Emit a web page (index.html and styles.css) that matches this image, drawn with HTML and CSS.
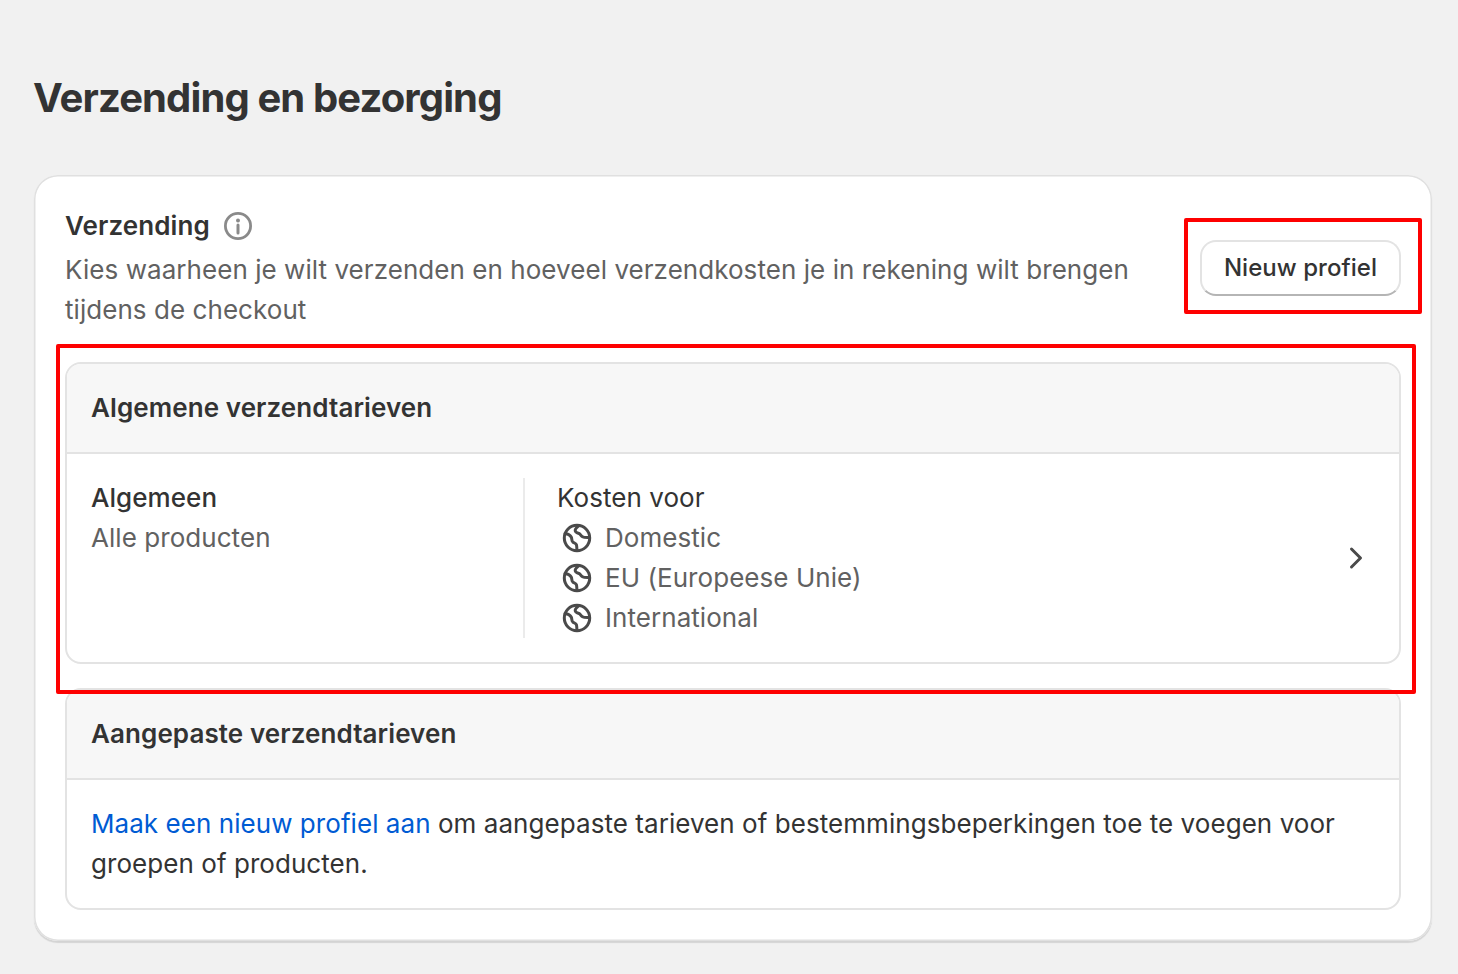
FILE: index.html
```html
<!DOCTYPE html>
<html lang="nl">
<head>
<meta charset="utf-8">
<title>Verzending en bezorging</title>
<link rel="stylesheet" href="styles.css">
</head>
<body>
<main class="page">
  <h1 class="page-title">Verzending en bezorging</h1>
  <section class="card">
    <header class="card-head">
      <div class="card-intro">
        <div class="card-title-row">
          <h2 class="card-title">Verzending</h2>
          <svg class="info-icon" viewBox="0 0 28 28" fill="none"><circle cx="14" cy="14" r="12.6" stroke="#8a8a8a" stroke-width="2.8"/><circle cx="14" cy="8.4" r="2" fill="#8a8a8a"/><path d="M14 13v8" stroke="#8a8a8a" stroke-width="3" stroke-linecap="round"/></svg>
        </div>
        <p class="muted">Kies waarheen je wilt verzenden en hoeveel verzendkosten je in rekening wilt brengen tijdens de checkout</p>
      </div>
      <button class="button">Nieuw profiel</button>
    </header>

    <div class="panel panel-general">
      <h3 class="panel-head">Algemene verzendtarieven</h3>
      <div class="profile-row">
        <div class="profile-name">
          <div class="strong">Algemeen</div>
          <div class="muted">Alle producten</div>
        </div>
        <div class="profile-zones">
          <div class="zones-title">Kosten voor</div>
          <div class="zone"><svg class="globe" viewBox="0 0 30 30" fill="none"><use href="#globe"/></svg><span class="muted">Domestic</span></div>
          <div class="zone"><svg class="globe" viewBox="0 0 30 30" fill="none"><use href="#globe"/></svg><span class="muted">EU (Europeese Unie)</span></div>
          <div class="zone"><svg class="globe" viewBox="0 0 30 30" fill="none"><use href="#globe"/></svg><span class="muted">International</span></div>
        </div>
        <svg class="chevron" viewBox="0 0 14 24" fill="none"><path d="M2.500 3l9 9-9 9" stroke="#4a4a4a" stroke-width="3" stroke-linecap="round" stroke-linejoin="round"/></svg>
      </div>
    </div>

    <div class="panel panel-custom">
      <h3 class="panel-head">Aangepaste verzendtarieven</h3>
      <p class="panel-body"><a class="link" href="#">Maak een nieuw profiel aan</a> om aangepaste tarieven of bestemmingsbeperkingen toe te voegen voor groepen of producten.</p>
    </div>
  </section>
</main>
<div class="highlight highlight-button"></div>
<div class="highlight highlight-panel"></div>
<svg class="sprite" aria-hidden="true"><defs><g id="globe" stroke="#4a4a4a" stroke-width="3" stroke-linejoin="round" stroke-linecap="round"><circle cx="15" cy="15" r="12.7"/><path d="M17 2.500c-2 1.500-4 3-3.800 5.200.2 2 2.300 2.300 3.800 2.800 1.500.5 1.800 2.300 3.500 3.300 1.600.9 4 .8 6.700.7"/><path d="M3.200 10.500c2.500.3 5 1.500 6 3.500s.2 3.500 1.500 4.800c1.500 1.400 3.300 1.400 3.800 3.200.4 1.600.2 3.200.5 5.200"/></g></defs></svg>
</body>
</html>
```

FILE: styles.css
```css
* { box-sizing: border-box; }
html, body { margin: 0; padding: 0; }
body {
  background: #f1f1f1;
  font-family: Inter, "Liberation Sans", sans-serif;
  font-size: 26px;
  line-height: 40px;
  letter-spacing: .055px;
  color: #333;
  position: relative;
  height: 974px;
  overflow: hidden;
}
.page { padding: 72px 26px 0 34px; }
.page-title {
  margin: 0 0 51px -1px;
  font-size: 40px;
  line-height: 52px;
  font-weight: 700;
  letter-spacing: -0.88px;
}
.card {
  background: #fff;
  border-radius: 24px;
  padding: 31px 31px 31px;
  height: 766px;
  box-shadow: inset 0 0 0 1.5px #e0e0e0, 0 2px 1px rgba(0,0,0,.12);
}
.card-head { display: flex; justify-content: space-between; align-items: center; gap: 40px; margin-bottom: 32px; }
.card-intro { flex: 1; min-width: 0; }
.card-title-row { display: flex; align-items: center; gap: 14px; height: 40px; margin-bottom: 4px; }
.card-title { margin: 0; font-size: 26px; line-height: 40px; font-weight: 620; letter-spacing: .09px; }
.info-icon { width: 28px; height: 28px; display: block; }
.muted { color: #616161; margin: 0; }
.button {
  font: 550 24px/32px Inter, "Liberation Sans", sans-serif;
  letter-spacing: .05px;
  color: #333;
  background: #fff;
  border: 2px solid #e3e3e3;
  border-bottom-color: #b5b5b5;
  border-radius: 16px;
  width: 201px;
  height: 56px;
  padding: 0;
  flex: none;
}
.panel { border: 2px solid #e3e3e3; border-radius: 16px; overflow: hidden; background: #fff; }
.panel-custom { margin-top: 24px; }
.panel-head {
  margin: 0;
  background: #f7f7f7;
  border-bottom: 2px solid #e3e3e3;
  height: 90px;
  padding: 24px;
  font-size: 26px;
  line-height: 40px;
  font-weight: 620;
  letter-spacing: .09px;
}
.profile-row { display: flex; padding: 24px; align-items: center; }
.profile-name { width: 434px; height: 160px; border-right: 2px solid #ebebeb; flex: none; }
.strong { font-weight: 550; }
.profile-zones { flex: 1; padding-left: 32px; }
.zone { display: flex; align-items: center; gap: 13px; height: 40px; padding-left: 5px; }
.globe { width: 30px; height: 30px; display: block; flex: none; }
.chevron { width: 14px; height: 24px; margin-right: 12px; flex: none; }
.panel-body { margin: 0; padding: 24px; }
.link { color: #005bd3; text-decoration: none; }
.sprite { position: absolute; width: 0; height: 0; }
.highlight { position: absolute; border: 4px solid #fe0000; border-radius: 2px; pointer-events: none; }
.highlight-button { left: 1184px; top: 218px; width: 238px; height: 96px; }
.highlight-panel { left: 56px; top: 344px; width: 1360px; height: 350px; }
```
